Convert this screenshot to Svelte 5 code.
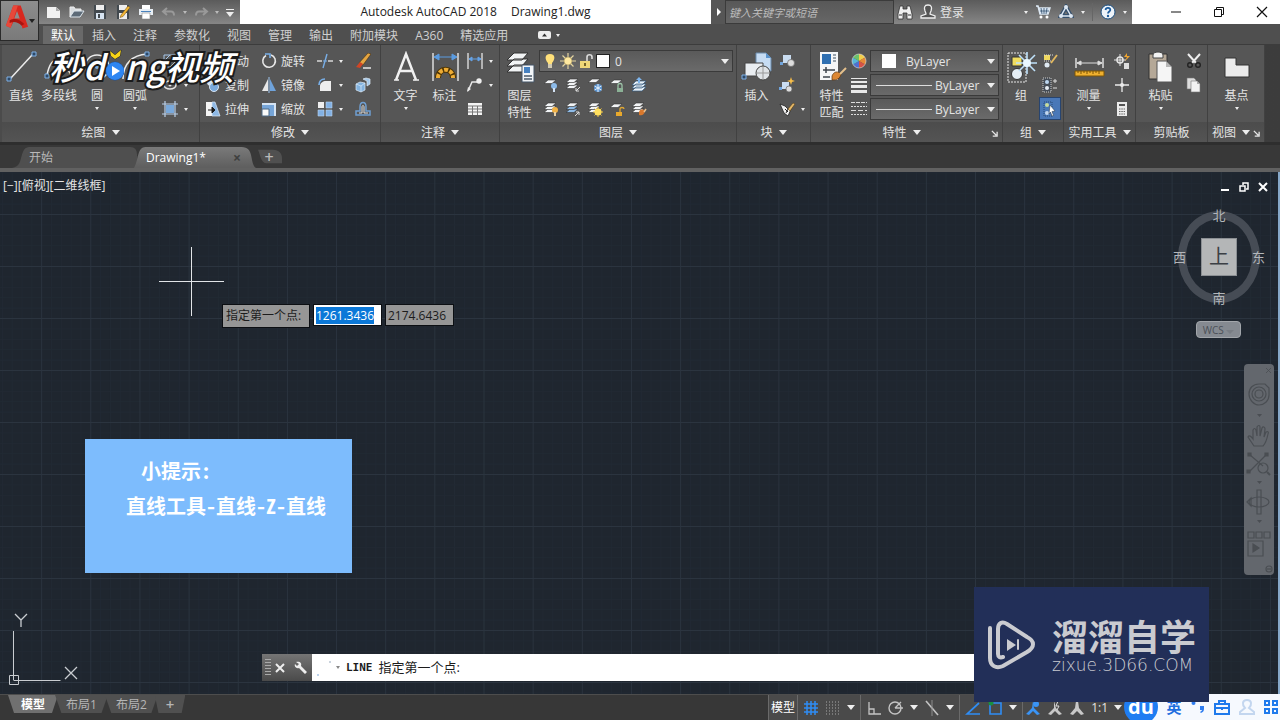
<script>
  import { onMount } from 'svelte';

  const tabs = ['默认', '插入', '注释', '参数化', '视图', '管理', '输出', '附加模块', 'A360', '精选应用'];
  const xLines = Array.from({ length: 60 }, (_, i) => i);
  const yLines = Array.from({ length: 30 }, (_, i) => i);
  const stepX = 49.15;
  const stepY = 52;

  let activeTab = $state('默认');
  let search = $state('');
  let pointX = $state('1261.3436');
  let pointY = $state('2174.6436');
  let xInput;

  onMount(() => {
    xInput.focus();
    xInput.select();
  });

  const sheet = (y, c = '#f2f4f6') => `<path d="M5 ${y}h8l-4 3.500H1z" fill="${c}" stroke="#333" stroke-width=".6"/>`;
  const sheets = sheet(8) + sheet(5) + sheet(2);
  const blueSheets = sheet(8, '#8fbbe6') + sheet(5, '#8fbbe6') + sheet(2);

  // 16 x 16
  const small = {
    file: '<path d="M1 3h9l4 3.500V14H1z" fill="#f1f1f1"/><path d="M10 3v4h4z" fill="#aaa"/>',
    open: '<path d="M1 13V3h4l1 2h6v2" fill="#d9dde0" stroke="#eee"/><path d="M1 13l4-6h10l-4 6z" fill="#5d6b78" stroke="#dfe8ef"/>',
    save: '<path d="M2 1h12v14H2z" fill="#42494f"/><path d="M4 1h8v5H4z" fill="#eee"/><path d="M4 9h8v6H4z" fill="#d7e4f2"/><path d="M6 10h2v4H6z" fill="#42494f"/>',
    saveas: '<path d="M2 1h12v14H2z" fill="#42494f"/><path d="M4 1h8v5H4zM4 9h8v6H4z" fill="#eee"/><path d="M6 11l7-9 2 1.500-7 9-3 1z" fill="#f2b636" stroke="#6b4a12" stroke-width=".5"/>',
    print: '<path d="M4 1h8v4H4z" fill="#fff"/><path d="M1 5h14v6H1z" fill="#e8eef4"/><path d="M3 7h10v1H3z" fill="#4a83bd"/><path d="M4 9h8v6H4z" fill="#fff" stroke="#888" stroke-width=".6"/>',
    undo: '<path d="M6 4L2 7.500 6 11M3 7.500h7c3 0 3 2 3 4" fill="none" stroke="#999" stroke-width="2"/>',
    redo: '<path d="M10 4l4 3.500-4 3.500M13 7.500H6c-3 0-3 2-3 4" fill="none" stroke="#999" stroke-width="2"/>',
    binoculars: '<path d="M3 2h3v3h4V2h3l2 8v5h-5V9H6v6H1v-5z" fill="#f0f0f0" stroke="#333" stroke-width=".8"/><path d="M2 11h3M11 11h3" stroke="#333"/>',
    user: '<path d="M8 1c4 0 4 3 3 6-.5 1-1 2-1 3l5 2v2H1v-2l5-2c0-1-.5-2-1-3C4 4 4 1 8 1z" fill="#555" stroke="#eee" stroke-width="1.300"/>',
    cart: '<path d="M1 2h2l2 8h8l2-6H4" fill="#d6e3f0" stroke="#dce7f2" stroke-width="1.500"/><path d="M5 7h9M6 4l1 6M9 4v6M12 4l-1 6" stroke="#34506f" stroke-width=".8"/><circle cx="6" cy="13" r="1.500" fill="#fff"/><circle cx="12" cy="13" r="1.500" fill="#fff"/>',
    app: '<path d="M8 3l5 9H3z" fill="none" stroke="#35506d" stroke-width="4"/><path d="M8 3l5 9H3z" fill="none" stroke="#dce7f2" stroke-width="1.500"/><circle cx="8" cy="3" r="2" fill="#dce7f2"/><circle cx="3" cy="12" r="2" fill="#dce7f2"/><circle cx="13" cy="12" r="2" fill="#dce7f2"/>',
    help: '<circle cx="8" cy="8" r="7" fill="#eef4fa" stroke="#1d4f80" stroke-width="1"/><path d="M5.500 6C6 3 10.500 3.500 10.300 6c0 1.500-2.300 1.500-2.300 3.500" fill="none" stroke="#1d5c9c" stroke-width="1.800"/><circle cx="8" cy="12" r="1.200" fill="#1d5c9c"/>',
    hatch: '<path d="M2 2h12v12H2z" fill="none" stroke="#a7c7ea"/><path d="M2 8l6-6M2 14L14 2M8 14l6-6" stroke="#a7c7ea"/>',
    ellipse: '<ellipse cx="8" cy="8" rx="6" ry="4" fill="none" stroke="#e4e4e4" stroke-width="1.500"/><circle cx="8" cy="8" r="1.500" fill="#e4e4e4"/>',
    region: '<path d="M4 4h8v8H4z" fill="#79a9dc"/><path d="M3 0v16M13 0v16M0 3h16M0 13h16" stroke="#b9d0ea" stroke-width="1.200"/>',
    move: '<path d="M8 1v14M1 8h14M8 1L6 3.500h4zM8 15l-2-2.500h4zM1 8l2.500-2v4zM15 8l-2.500-2v4z" fill="#fff" stroke="#eee"/>',
    copy: '<circle cx="6" cy="5" r="4" fill="#d9e6f4"/><circle cx="9" cy="10" r="4.500" fill="#79a9dc" stroke="#d5e4f4"/>',
    stretch: '<path d="M1 1h6v14H1z" fill="#f4f4f4"/><path d="M7 1h3l5 14H7z" fill="#8eb8e4" stroke="#dce8f5" stroke-width=".7"/><path d="M3 9h5M7 6l3 3-3 3z" stroke="#1b1b1b" fill="#1b1b1b"/>',
    rotate: '<path d="M5 2.500a6.300 6.300 0 1 0 5-.5" fill="none" stroke="#e6e6e6" stroke-width="1.600"/><path d="M4 1h5v4" fill="none" stroke="#77aee8" stroke-width="1.600"/>',
    mirror: '<path d="M7 2v12H1z" fill="#e8e8e8"/><path d="M9 2v12h6z" fill="#6fa3db"/><path d="M8 0v16" stroke="#9dc4ee"/>',
    scale: '<path d="M1 2h14v13H1z" fill="#76a5d8"/><path d="M1 2h14v2H1zM13 4h2v11h-2z" fill="#d5e3f2"/><path d="M1 8h7v7H1z" fill="#fafafa" stroke="#4d6884"/>',
    trim: '<path d="M0 8h5M11 8h5" stroke="#d8d8d8" stroke-width="1.500"/><path d="M6 8h4" stroke="#79aee6"/><path d="M10 1L6 15" stroke="#79aee6" stroke-width="1.400"/>',
    fillet: '<path d="M3 14V9c0-3 3-5 6-5h5v10z" fill="#eee"/><path d="M2 8c0-3 2-6 6-6" fill="none" stroke="#78b0ea" stroke-width="1.700"/>',
    array: '<path d="M1 1h6v6H1z" fill="#eee"/><path d="M9 1h6v6H9zM1 9h6v6H1zM9 9h6v6H9z" fill="#82b1e4" stroke="#b9d4f0" stroke-width=".6"/>',
    erase: '<path d="M4 10l9-10 3 1-8 11z" fill="#e4a541" stroke="#3b2508" stroke-width=".5"/><path d="M1 14l4-5 3 2-3 4z" fill="#cf4526"/><path d="M8 15h8" stroke="#e8e8e8" stroke-width="1.500"/>',
    explode: '<path d="M1 7l4-2 5 1v7l-4 2-5-2z" fill="#83b3df" stroke="#dcebf8" stroke-width=".7"/><path d="M1 7l5 2 4-3M6 9v6" stroke="#dcebf8" fill="none" stroke-width=".7"/><path d="M8 2l3-1 4 1v5l-3 2V4z" fill="#a3c8ea" stroke="#dcebf8" stroke-width=".7"/>',
    offset: '<path d="M1 14v-4h4V6c0-6 6-6 6 0v4h4v4z" fill="none" stroke="#6f9fd2" stroke-width="1.500"/><path d="M4 12h3V6c0-2 2-2 2 0v6h4" fill="none" stroke="#ddd"/>',
    linear: '<path d="M1 0v16M15 0v16" stroke="#e6e6e6" stroke-width="1.300"/><path d="M2 6h12M2 6l3-2v4zM14 6l-3-2v4z" stroke="#65a2e6" fill="#65a2e6"/>',
    leader: '<path d="M1 14L5 5h5" fill="none" stroke="#e8e8e8" stroke-width="1.500"/><path d="M0 15l1-5 3 2z" fill="#e8e8e8"/><circle cx="12" cy="4" r="2.700" fill="#eee"/>',
    table: '<path d="M1 2h14v12H1z" fill="#f4f4f4"/><path d="M1 5h14M1 8h14M1 11h14M5.500 5v9M10.500 5v9" stroke="#777"/>',
    bulb: '<path d="M8 1c6 0 5 6 2 9v4H6v-4C3 7 2 1 8 1z" fill="#ffe07a"/><path d="M6 11h4v4H6z" fill="#d0c9b2"/>',
    sun: '<path d="M8 0v16M0 8h16M2.500 2.500l11 11M13.500 2.500l-11 11" stroke="#e3d3a0" stroke-width="1.200"/><circle cx="8" cy="8" r="4" fill="#ffe9a0" stroke="#8a7b48" stroke-width=".5"/>',
    unlock: '<path d="M9 8V4c0-3 5-3 5 0v2" fill="none" stroke="#ddd" stroke-width="1.600"/><path d="M2 8h10v7H2z" fill="#efd779"/><path d="M7 10v3" stroke="#4b3d10" stroke-width="1.500"/>',
    layOff: sheet(3) + '<circle cx="11" cy="9" r="3" fill="#8dbbe9"/><path d="M11 11v4" stroke="#d4e4f5" stroke-width="2"/>',
    layIso: sheets + '<path d="M15 10l-4 4m0-3v3h3" stroke="#ddd" fill="none"/>',
    layFreeze: sheet(2) + '<circle cx="11" cy="11" r="4" fill="#5a93d0"/><path d="M11 7v8M7.500 9l7 4M14.500 9l-7 4" stroke="#e6f1fb"/>',
    layLock: sheet(3) + '<path d="M9 11V8c0-2 4-2 4 0v3" fill="none" stroke="#9dc4a8" stroke-width="1.300"/><path d="M8 11h6v4H8z" fill="#8bb196"/>',
    layCur: '<path d="M5 10h10l-4 4H1zM5 7h10l-4 4H1zM5 4h10l-4 4H1z" fill="#e9f1f8" stroke="#335a80" stroke-width=".7"/><path d="M8 0l3 3H9v3H7V3H5z" fill="#7fb6ee"/>',
    layOn: sheets + '<circle cx="12" cy="9" r="3" fill="#f2b244"/><path d="M12 11v4" stroke="#e8cfa2" stroke-width="2"/>',
    layUniso: blueSheets + '<path d="M10 15l4-4m0 3v-3h-3" stroke="#ddd" fill="none"/>',
    layThaw: sheets + '<path d="M11 6v10M6 11h10M7.500 7.500l7 7M14.500 7.500l-7 7" stroke="#f2c43d"/><circle cx="11" cy="11" r="3.500" fill="#ffdf5e"/>',
    layUnlock: sheet(3) + '<path d="M11 11V8c0-2 4-2 4 0" fill="none" stroke="#e0a733" stroke-width="1.300"/><path d="M7 11h6v4H7z" fill="#e9a92c"/>',
    layMatch: sheets + '<path d="M8 11c1-3 4-3 6-1-1 4-3 5-6 4z" fill="#d9782c"/><path d="M13 11l2-3" stroke="#e8c090" stroke-width="1.500"/>',
    blkNew: '<path d="M4 2h8v8H4z" fill="#c9dcf0"/><circle cx="12" cy="10" r="3.500" fill="#ddd" stroke="#666" stroke-width=".7"/><path d="M1 9h3v3H1z" fill="#6fa3db"/>',
    blkEdit: '<path d="M3 5h7v7H3z" fill="#c9dcf0"/><circle cx="10" cy="12" r="3" fill="#ddd" stroke="#666" stroke-width=".7"/><path d="M12 0l1 3 3 1-3 1-1 3-1-3-3-1 3-1z" fill="#f6bd4a"/><path d="M0 10h3v3H0z" fill="#6fa3db"/>',
    blkAttr: '<path d="M1 3l5 2 3 3 4-2-4 9-4-3z" fill="#f0f0f0" stroke="#222" stroke-width=".8"/><path d="M6 8l3 3M9 8l-2 4" stroke="#222"/><path d="M9 8l5-6 2 1-5 7z" fill="#e5b868" stroke="#4a3510" stroke-width=".5"/>',
    wheel: '<path d="M8 8V1a7 7 0 0 1 6 3.500z" fill="#f3cf4c"/><path d="M8 8l6-3.500a7 7 0 0 1 0 7z" fill="#e88a36"/><path d="M8 8l6 3.500A7 7 0 0 1 8 15z" fill="#d65346"/><path d="M8 8v7a7 7 0 0 1-6-3.500z" fill="#4f6fd0"/><path d="M8 8l-6 3.500a7 7 0 0 1 0-7z" fill="#58b5d9"/><path d="M8 8L2 4.500A7 7 0 0 1 8 1z" fill="#6cc36a"/><circle cx="8" cy="8" r="7" fill="none" stroke="#ddd" stroke-width=".6"/>',
    weights: '<path d="M0 1h16v1H0zM0 4h16v2H0zM0 8h16v3H0zM0 13h16v3H0z" fill="#e8e8e8"/>',
    dashes: '<path d="M0 1.500h16" stroke="#ddd" stroke-dasharray="4 1"/><path d="M0 5.500h16M0 13.500h16" stroke="#ddd" stroke-dasharray="2 1"/><path d="M0 9.500h16" stroke="#ddd" stroke-dasharray="5 2"/>',
    ungroup: '<path d="M2 2h6v5H2z" fill="#f0d95f"/><path d="M2 2h9M2 8h9" stroke="#ddd" stroke-dasharray="1 1"/><circle cx="5" cy="12" r="2.500" fill="#dfe9f2"/><path d="M9 10l6-8" stroke="#e3b95f" stroke-width="1.800"/>',
    groupEdit: '<path d="M1 1h8v14H1z" fill="#454c55" stroke="#ccc" stroke-dasharray="1 1"/><circle cx="5" cy="5" r="2" fill="#bcd6ef"/><circle cx="5" cy="11" r="2" fill="#e8eef4"/><path d="M11 4h4M13 2v4M11 11h4" stroke="#ddd"/>',
    groupSel: '<path d="M2 1h8v14H2z" fill="none" stroke="#294b73" stroke-dasharray="1 1"/><circle cx="5" cy="4" r="2" fill="#c8dc9c"/><circle cx="5" cy="12" r="2" fill="#c3d7ee"/><path d="M8 4l5 6-3 .5 1.500 4-1.500.5-1.500-4L7 13z" fill="#fff" stroke="#234" stroke-width=".5"/>',
    idPoint: '<circle cx="6" cy="7" r="3" fill="none" stroke="#e5e5e5" stroke-width="1.500"/><path d="M6 1v12M0 7h12" stroke="#e5e5e5"/><path d="M13 0l-3 4h3l-2 4 5-5h-3z" fill="#f0a52f"/><path d="M10 10h5v6h-5z" fill="#ddd"/>',
    cross: '<path d="M8 1v14M1 8h14" stroke="#ececec" stroke-width="1.300"/><circle cx="8" cy="8" r="2" fill="#ececec"/>',
    calc: '<path d="M3 1h10v14H3z" fill="#ececec"/><path d="M5 3h6v2H5z" fill="#555"/><path d="M5 8h6M5 10.500h6M5 13h6" stroke="#666" stroke-dasharray="1.500 .8"/>',
    cut: '<path d="M2 1l8 9M14 1L6 10" stroke="#eee" stroke-width="2"/><circle cx="4" cy="12" r="2.300" fill="none" stroke="#222" stroke-width="1.400"/><circle cx="12" cy="12" r="2.300" fill="none" stroke="#222" stroke-width="1.400"/>',
    pages: '<path d="M1 1h7l2 2v9H1z" fill="#ddd" stroke="#777" stroke-width=".6"/><path d="M5 4h6l3 3v8H5z" fill="#f3f3f3" stroke="#777" stroke-width=".6"/><path d="M11 4v3h3z" fill="#aaa"/>'
  };

  // 32 x 32
  const large = {
    line: '<path d="M5 28L28 3" stroke="#ececec" stroke-width="1.500"/><path d="M2 26h4v4H2zM27 1h4v4h-4z" fill="#2f4a68" stroke="#7fb0e6"/>',
    pline: '<path d="M4 24C8 4 18 4 28 24" fill="none" stroke="#ececec" stroke-width="1.500"/><path d="M2 23h4v4H2z" fill="#2f4a68" stroke="#7fb0e6"/>',
    circle: '<circle cx="16" cy="16" r="12" fill="none" stroke="#ececec" stroke-width="1.500"/><circle cx="16" cy="16" r="2" fill="#7fb0e6"/>',
    arc: '<path d="M4 28C4 12 14 4 28 3" fill="none" stroke="#ececec" stroke-width="1.500"/><path d="M26 1h4v4h-4z" fill="#2f4a68" stroke="#7fb0e6"/>',
    text: '<path d="M6 29L16 3l10 26M9 20h14" fill="none" stroke="#f1f1f1" stroke-width="2.500"/><path d="M4 29h5M23 29h6" stroke="#f1f1f1" stroke-width="1.500"/>',
    dim: '<path d="M4 2v28M29 2v28" stroke="#ddd" stroke-width="1.500"/><path d="M5 6h23M5 6l5-3v6zM28 6l-5-3v6z" fill="#5b9be0" stroke="#5b9be0"/><path d="M9 27c0-11 15-11 15 0" fill="none" stroke="#4e3505" stroke-width="6"/><path d="M9 27c0-11 15-11 15 0" fill="none" stroke="#edac35" stroke-width="4" stroke-dasharray="4 1.500"/>',
    layers: '<path d="M10 14h14l-6 7H3zM10 8h14l-6 7H3zM10 2h14l-6 7H3z" fill="#f2f4f5" stroke="#333"/><path d="M18 14h12v17H18z" fill="#f2f5f8" stroke="#456"/><path d="M20 16h6v6h-6z" fill="#4681c1"/><path d="M20 25h8M20 28h8" stroke="#4b5a69" stroke-width="1.500"/>',
    insert: '<path d="M15 2h10l5 5v13H15z" fill="#c6dcf3" stroke="#6a8cae"/><path d="M25 2v5h5z" fill="#5c94cc"/><path d="M4 12h18v13H4z" fill="#e9edf1" stroke="#444"/><circle cx="22" cy="22" r="7" fill="#dfe3e6" stroke="#444"/><path d="M22 16v12M16 22h12" stroke="#999"/><path d="M1 24h4v4H1z" fill="#2f4a68" stroke="#7fb0e6"/>',
    match: '<path d="M4 1h18v28H4z" fill="#f5f6f7"/><path d="M6 3h9v10H6z" fill="#2f6fb1"/><path d="M17 4h3M17 7h3M17 10h3" stroke="#7b8894" stroke-width="1.500"/><path d="M7 19h12M10 16v6M7 26h7" stroke="#3e454d" stroke-width="1.500"/><path d="M16 25c2-5 6-5 9-2-1 5-4 6-9 6z" fill="#dd8733" stroke="#5d350d" stroke-width=".7"/><path d="M24 23l6-6" stroke="#e4c08c" stroke-width="2"/>',
    group: '<path d="M3 2h18v29H3z" fill="none" stroke="#e6e6e6" stroke-dasharray="2 1"/><path d="M7 6h10v9H7z" fill="#efdc60" stroke="#333"/><circle cx="12" cy="23" r="5.500" fill="#e5eef5" stroke="#333"/><path d="M22 1v22M11 12h21M14 4l16 16M30 4L14 20" stroke="#bfe2fb" stroke-width="1.600"/><circle cx="22" cy="12" r="4" fill="#e9f7ff"/>',
    measure: '<path d="M3 7v10M30 7v10" stroke="#ddd" stroke-width="1.500"/><path d="M4 12h25M4 12l4-2v4zM29 12l-4-2v4z" fill="#ddd" stroke="#ddd"/><path d="M2 20h29v5H2z" fill="#efb02f" stroke="#7d5406"/><path d="M5 20v2M8 20v3M11 20v2M14 20v3M17 20v2M20 20v3M23 20v2M26 20v3" stroke="#7d5406"/>',
    paste: '<path d="M4 3h18v25H4z" fill="#b5a897" stroke="#333"/><path d="M8 4c0-4 10-4 10 0v3H8z" fill="#f3f3f3" stroke="#444"/><path d="M12 10h9l6 6v15H12z" fill="#f5f5f5" stroke="#555"/><path d="M21 10v6h6z" fill="#b6b6b6"/>',
    base: '<path d="M4 7h11v7h13v12H4z" fill="#ebebeb" stroke="#333"/>'
  };

  const status = {
    grid: '<path d="M4 1v14M8 1v14M12 1v14M1 4h14M1 8h14M1 12h14" stroke="#2f8df5" stroke-width="1.500"/>',
    dots: '<path d="M1 2h14M1 5h14M1 8h14M1 11h14M1 14h14" stroke="#a8a8a8" stroke-dasharray="1 2"/>',
    ortho: '<path d="M3 2v12h12M3 9h5v5" fill="none" stroke="#c4c4c4" stroke-width="1.300"/>',
    polar: '<circle cx="7" cy="8" r="6" fill="none" stroke="#c4c4c4" stroke-width="1.400"/><path d="M7 8l6-6M7 8h8" stroke="#c4c4c4" stroke-width="1.400"/>',
    iso: '<path d="M2 1l12 14" stroke="#c4c4c4" stroke-width="1.600"/><path d="M8 0v16" stroke="#8c8c8c"/>',
    track: '<path d="M14 3L2 14h13" fill="none" stroke="#2f8df5" stroke-width="1.700"/>',
    osnap: '<path d="M3 3h11v11H3z" fill="none" stroke="#2f8df5" stroke-width="1.600"/><circle cx="4" cy="3" r="2.500" fill="#18913f"/>',
    annoA: '<path d="M8 1l1 7 6 6-3 1-4-4-4 4-3-1 6-6z" fill="#3a94f6"/><circle cx="11" cy="4" r="3" fill="#3a94f6"/>',
    annoB: '<path d="M7 1l2 7 6 6-3 1-4-4-4 4-3-1 6-6z" fill="#c8c8c8"/><path d="M11 1l-2 5h3l-2 4" stroke="#ddd" fill="none"/>',
    annoC: '<path d="M7 1h2l1 7 5 6-3 1-4-4-4 4-3-1 5-6z" fill="#c8c8c8"/>'
  };
</script>

{#snippet icon(name)}
  <svg class="i16" viewBox="0 0 16 16" aria-hidden="true">{@html small[name] ?? status[name]}</svg>
{/snippet}

{#snippet big(name, lines, caret = false)}
  <button class="big">
    <svg class="i32" viewBox="0 0 32 32" aria-hidden="true">{@html large[name]}</svg>
    {#each lines as text}<span>{text}</span>{/each}
    {#if caret}<i class="caret"></i>{/if}
  </button>
{/snippet}

{#snippet tool(name, text = '', caret = false)}
  <button class="tool" aria-label={text || name}>
    {@render icon(name)}
    {#if text}<span>{text}</span>{/if}
    {#if caret}<i class="caret"></i>{/if}
  </button>
{/snippet}

{#snippet title(text, caret = true, launcher = false)}
  <footer class="panel-title" class:launch={launcher}>
    <span>{text}</span>
    {#if caret}<i class="caret wide"></i>{/if}
    {#if launcher}
      <svg class="launcher" viewBox="0 0 8 8"><path d="M1 1l5 5M7 2v5H2" fill="none" stroke="#e6e6e6" stroke-width="1.500" /></svg>
    {/if}
  </footer>
{/snippet}

<div class="app">
  <header class="titlebar">
    <div class="quick">
      {@render tool('file')}
      {@render tool('open')}
      {@render tool('save')}
      {@render tool('saveas')}
      {@render tool('print')}
      <span class="history">
        {@render tool('undo')}<i class="caret"></i>
        {@render tool('redo')}<i class="caret"></i>
      </span>
      <button class="more" aria-label="自定义"><i class="caret wide"></i></button>
    </div>
    <h1><span>Autodesk AutoCAD 2018</span><span>Drawing1.dwg</span></h1>
    <div class="info">
      <button class="expand" aria-label="展开"><svg viewBox="0 0 6 8"><path d="M1 0l4 4-4 4z" fill="#fff" /></svg></button>
      <input class="search" type="text" aria-label="搜索" placeholder="键入关键字或短语" bind:value={search} />
      <div class="account">
        {@render tool('binoculars')}
        {@render tool('user', '登录')}
        <i class="caret push"></i>
        {@render tool('cart')}
        {@render tool('app')}
        <i class="caret"></i>
        <i class="divider"></i>
        {@render tool('help')}
        <i class="caret"></i>
      </div>
    </div>
    <div class="window">
      <button aria-label="最小化"><svg viewBox="0 0 12 12"><path d="M1 6h10" stroke="#111" /></svg></button>
      <button aria-label="还原"><svg viewBox="0 0 12 12"><path d="M1.500 3.500h7v7h-7zM3.500 3.500v-2h7v7h-2" fill="none" stroke="#111" /></svg></button>
      <button aria-label="关闭"><svg viewBox="0 0 12 12"><path d="M1 1l10 10M11 1L1 11" stroke="#111" stroke-width="1.200" /></svg></button>
    </div>
  </header>

  <button class="logo" aria-label="应用程序菜单">
    <svg viewBox="0 0 26 30">
      <path d="M9 2h8l8 23-6 2-2-7H9l-3 6-5-2z" fill="#d8281f" />
      <path d="M9 2h5L6 26l-5-2z" fill="#e8483a" />
      <path d="M13 8l3 8h-6z" fill="#8e8e8e" />
      <path d="M5 18c5-3 11-1 16 4l-3 2c-4-4-8-5-13-3z" fill="#a9140f" />
    </svg>
    <i class="caret dark"></i>
  </button>

  <nav class="tabs">
    {#each tabs as tab}
      <button class:active={tab === activeTab} onclick={() => (activeTab = tab)}>{tab}</button>
    {/each}
    <button class="fold" aria-label="最小化功能区">
      <svg viewBox="0 0 13 8"><rect width="13" height="8" rx="2" fill="#eee" /><path d="M4 5.500l2.500-3 2.500 3z" fill="#333" /></svg>
      <i class="caret"></i>
    </button>
  </nav>

  <div class="ribbon">
    <section class="panel draw">
      <div class="body">
        {@render big('line', ['直线'])}
        {@render big('pline', ['多段线'])}
        {@render big('circle', ['圆'], true)}
        {@render big('arc', ['圆弧'], true)}
        <div class="col">
          {@render tool('hatch', '', true)}
          {@render tool('ellipse', '', true)}
          {@render tool('region', '', true)}
        </div>
      </div>
      {@render title('绘图')}
    </section>

    <section class="panel modify">
      <div class="body">
        <div class="col">
          {@render tool('move', '移动')}
          {@render tool('copy', '复制')}
          {@render tool('stretch', '拉伸')}
        </div>
        <div class="col">
          {@render tool('rotate', '旋转')}
          {@render tool('mirror', '镜像')}
          {@render tool('scale', '缩放')}
        </div>
        <div class="col">
          {@render tool('trim', '', true)}
          {@render tool('fillet', '', true)}
          {@render tool('array', '', true)}
        </div>
        <div class="col">
          {@render tool('erase')}
          {@render tool('explode')}
          {@render tool('offset')}
        </div>
      </div>
      {@render title('修改')}
    </section>

    <section class="panel annotate">
      <div class="body">
        {@render big('text', ['文字'], true)}
        {@render big('dim', ['标注'])}
        <div class="col">
          {@render tool('linear', '', true)}
          {@render tool('leader', '', true)}
          {@render tool('table')}
        </div>
      </div>
      {@render title('注释')}
    </section>

    <section class="panel layers">
      <div class="body">
        {@render big('layers', ['图层', '特性'])}
        <div class="col stretch">
          <div class="field">
            {@render icon('bulb')}
            {@render icon('sun')}
            {@render icon('unlock')}
            <i class="swatch"></i>
            <select aria-label="图层"><option>0</option></select>
            <i class="caret wide"></i>
          </div>
          <div class="row">
            {@render tool('layOff')}
            {@render tool('layIso')}
            {@render tool('layFreeze')}
            {@render tool('layLock')}
            {@render tool('layCur')}
          </div>
          <div class="row">
            {@render tool('layOn')}
            {@render tool('layUniso')}
            {@render tool('layThaw')}
            {@render tool('layUnlock')}
            {@render tool('layMatch')}
          </div>
        </div>
      </div>
      {@render title('图层')}
    </section>

    <section class="panel block">
      <div class="body">
        {@render big('insert', ['插入'])}
        <div class="col">
          {@render tool('blkNew')}
          {@render tool('blkEdit')}
          {@render tool('blkAttr', '', true)}
        </div>
      </div>
      {@render title('块')}
    </section>

    <section class="panel props">
      <div class="body">
        {@render big('match', ['特性', '匹配'])}
        <div class="col">
          {@render tool('wheel')}
          {@render tool('weights')}
          {@render tool('dashes')}
        </div>
        <div class="col stretch">
          <div class="field">
            <i class="swatch big-swatch"></i>
            <select aria-label="颜色"><option>ByLayer</option></select>
            <i class="caret wide"></i>
          </div>
          <div class="field">
            <i class="sample"></i>
            <select aria-label="线宽"><option>ByLayer</option></select>
            <i class="caret wide"></i>
          </div>
          <div class="field">
            <i class="sample"></i>
            <select aria-label="线型"><option>ByLayer</option></select>
            <i class="caret wide"></i>
          </div>
        </div>
      </div>
      {@render title('特性', true, true)}
    </section>

    <section class="panel group">
      <div class="body">
        {@render big('group', ['组'])}
        <div class="col">
          {@render tool('ungroup')}
          {@render tool('groupEdit')}
          <button class="tool pressed" aria-label="组选择">{@render icon('groupSel')}</button>
        </div>
      </div>
      {@render title('组')}
    </section>

    <section class="panel utility">
      <div class="body">
        {@render big('measure', ['测量'], true)}
        <div class="col">
          {@render tool('idPoint')}
          {@render tool('cross')}
          {@render tool('calc')}
        </div>
      </div>
      {@render title('实用工具')}
    </section>

    <section class="panel clip">
      <div class="body">
        {@render big('paste', ['粘贴'], true)}
        <div class="col">
          {@render tool('cut')}
          {@render tool('pages')}
        </div>
      </div>
      {@render title('剪贴板', false)}
    </section>

    <section class="panel view">
      <div class="body">
        {@render big('base', ['基点'], true)}
      </div>
      {@render title('视图', true, true)}
    </section>
  </div>

  <nav class="files">
    <button class="doc">
      <svg viewBox="0 0 125 23" preserveAspectRatio="none"><path d="M0 23C8 22 8 16 10 9s4-8 9-8h99c5 0 7 3 7 8v14z" fill="#4f4f4f" /></svg>
      <span>开始</span>
    </button>
    <button class="doc current">
      <svg viewBox="0 0 125 23" preserveAspectRatio="none">
        <linearGradient id="doc" x2="0" y2="1"><stop stop-color="#7a7a7a" /><stop offset="1" stop-color="#5e5e5e" /></linearGradient>
        <path d="M0 23C3 18 3 12 5 7s4-6 8-6h97c7 0 9 4 10 9s2 12 5 13z" fill="url(#doc)" />
      </svg>
      <span>Drawing1*</span>
      <b>×</b>
    </button>
    <button class="doc plus" aria-label="新图形">
      <svg viewBox="0 0 26 23" preserveAspectRatio="none"><path d="M2 4h15c6 0 9 4 9 9v5H10C5 18 4 8 2 4z" fill="#505050" /></svg>
      <span>+</span>
    </button>
  </nav>

  <main class="canvas">
    <svg class="grid" aria-hidden="true">
      {#each xLines as i}
        {#each [1, 2, 3, 4] as k}
          <line class="minor" x1={-7.5 + (i + k / 5) * stepX} x2={-7.5 + (i + k / 5) * stepX} y1="0" y2="100%" />
        {/each}
      {/each}
      {#each yLines as i}
        {#each [1, 2, 3, 4] as k}
          <line class="minor" y1={-9.5 + (i + k / 5) * stepY} y2={-9.5 + (i + k / 5) * stepY} x1="0" x2="100%" />
        {/each}
      {/each}
      {#each xLines as i}
        <line class="major" x1={-7.5 + i * stepX} x2={-7.5 + i * stepX} y1="0" y2="100%" />
      {/each}
      {#each yLines as i}
        <line class="major" y1={-9.5 + i * stepY} y2={-9.5 + i * stepY} x1="0" x2="100%" />
      {/each}
    </svg>

    <p class="viewport">[−][俯视][二维线框]</p>

    <div class="mdi">
      <button aria-label="最小化"><svg viewBox="0 0 10 10"><path d="M1 7h8v2H1z" fill="#fff" /></svg></button>
      <button aria-label="还原"><svg viewBox="0 0 10 10"><path d="M1 4h5v5H1zM4 3V1h5v6H7" fill="none" stroke="#fff" stroke-width="1.500" /></svg></button>
      <button aria-label="关闭"><svg viewBox="0 0 10 10"><path d="M1 1l8 8M9 1L1 9" stroke="#fff" stroke-width="2" /></svg></button>
    </div>

    <svg class="crosshair" viewBox="0 0 66 70"><path d="M0 34.500h65M32.500 0v69" stroke="#e2e5e8" /></svg>

    <form class="dynamic" onsubmit={(e) => e.preventDefault()}>
      <label for="px">指定第一个点:</label>
      <input id="px" bind:this={xInput} bind:value={pointX} />
      <input class="idle" aria-label="Y" bind:value={pointY} />
    </form>

    <aside class="tip">
      <p class="head">小提示:</p>
      <p>直线工具-直线-Z-直线</p>
    </aside>

    <svg class="ucs" viewBox="0 0 72 74">
      <path d="M5.500 19v49M1.500 63.500h9v9h-9zM5.500 68.500h47" fill="none" stroke="#c9cdd1" />
      <path d="M7 2l6 6 6-6M13 8v7M57 55l12 12M69 55L57 67" fill="none" stroke="#c9cdd1" stroke-width="1.300" />
    </svg>

    <div class="cube">
      <span>北</span>
      <div class="ring">
        <span>西</span>
        <button>上</button>
        <span>东</span>
      </div>
      <span>南</span>
    </div>
    <button class="wcs">WCS <i></i></button>

    <div class="navbar">
      <svg viewBox="0 0 30 211" fill="none" stroke="#4a4e53" stroke-width="1.200">
        <path d="M22 4l5 5M27 4l-5 5" stroke-width=".8" />
        <path d="M15 20h6l4 4v7c0 6-5 10-10 10S5 36 5 30s4-10 10-10z" /><circle cx="15" cy="30" r="7" /><circle cx="15" cy="30" r="4" />
        <path d="M13 50h5l-2.500 3z" fill="#4a4e53" stroke="none" />
        <path d="M10 82l-6-9c1-2 3-1 5 2V66c1-2 2-2 3 0l1 6V63c1-2 3-2 3 0v9l2-8c1-2 3-1 3 1l-1 8 2-5c2-1 3 0 2 2-1 5-2 9-5 12z" />
        <path d="M6 91l13 11M22 91L5 108" /><path d="M4 89h3v3H4zM21 89h3v3h-3zM3 106h3v3H3z" fill="#4a4e53" /><circle cx="19" cy="104" r="5" /><path d="M23 108l3 3" stroke-width="2" />
        <path d="M13 117h5l-2.500 3z" fill="#4a4e53" stroke="none" />
        <ellipse cx="15" cy="138" rx="10" ry="5" /><path d="M13 126h4v24h-4zM3 138l4-4v8z" />
        <path d="M13 156h5l-2.500 3z" fill="#4a4e53" stroke="none" />
        <path d="M4 168h6v6H4zM12 168h6v6h-6zM20 168h6v6h-6zM4 177h15v15H4z" /><path d="M9 180l6 4-6 4z" fill="#4a4e53" />
        <circle cx="25" cy="205" r="3" /><path d="M23 205h4" />
      </svg>
    </div>

    <div class="command">
      <i class="grip"></i>
      <button aria-label="关闭"><svg viewBox="0 0 10 10"><path d="M1 1l8 8M9 1L1 9" stroke="#eee" stroke-width="2" /></svg></button>
      <button aria-label="自定义"><svg viewBox="0 0 14 14"><path d="M2 1c4-1 6 1 5 4l6 6-2 2-6-6C2 8 0 5 1 3l2 2 2-2z" fill="#eee" /></svg></button>
      <label for="cmd">
        <svg viewBox="0 0 24 20"><circle cx="6" cy="17" r="1" fill="#a9c4e6" /><circle cx="18" cy="4" r="1" fill="#b9c4d2" /></svg>
        <i class="caret grey"></i><b>LINE</b> 指定第一个点:
      </label>
      <input id="cmd" />
    </div>
  </main>

  <footer class="status">
    <div class="layouts">
      <button class="on">模型</button>
      <button>布局1</button>
      <button>布局2</button>
      <button class="add">+</button>
    </div>
    <div class="toggles">
      <button class="space">模型</button>
      <div class="set">
        {@render tool('grid')}
        {@render tool('dots')}
        <i class="caret wide"></i>
      </div>
      <div class="set">
        {@render tool('ortho')}
        {@render tool('polar')}
        <i class="caret wide"></i>
        {@render tool('iso')}
        <i class="caret wide"></i>
      </div>
      <div class="set">
        {@render tool('track')}
        {@render tool('osnap')}
        <i class="caret wide"></i>
      </div>
      <div class="set anno">
        {@render tool('annoA')}
        {@render tool('annoB')}
        {@render tool('annoC')}
        <button class="ratio">1:1</button>
        <i class="caret wide"></i>
      </div>
    </div>
    <div class="ime">
      <span class="du">du</span>
      <button class="lang">英</button>
      <svg viewBox="0 0 16 16"><circle cx="3.500" cy="4" r="2" fill="#2f7df0" /><path d="M10 7h4v3c0 2-1 3-3 4l-1-1c1-1 2-1 2-2h-2z" fill="#2f7df0" /></svg>
      <svg viewBox="0 0 16 16"><path d="M1 5h14v10H1zM5 5V2h6v3M1 9h14M8 8v3" fill="none" stroke="#1f7aec" stroke-width="2" /></svg>
      <svg viewBox="0 0 16 16"><path d="M8 1c5 0 5 5 2 8l5 4v2H1v-2l5-4C3 6 3 1 8 1z" fill="none" stroke="#c3d6ef" stroke-width="2" /></svg>
      <svg viewBox="0 0 16 16"><path d="M2 2h4v4H2zM10 2h4v4h-4zM2 10h4v4H2zM10 10h4v4h-4z" fill="none" stroke="#1f7aec" stroke-width="2" /></svg>
    </div>
  </footer>

  <div class="brand">
    <span>秒d</span>
    <svg viewBox="0 0 20 34">
      <path d="M6 2l5 4 6-5-1 6-5 3-4-3z" fill="#f7d417" stroke="#222" />
      <circle cx="11" cy="22" r="9" fill="#2e86f2" stroke="#1b4f97" />
      <path d="M8 17l8 5-8 5z" fill="#fff" />
    </svg>
    <span>ng视频</span>
  </div>

  <div class="site">
    <svg viewBox="0 0 48 50" fill="none" stroke="#cacbd0" stroke-width="4" stroke-linecap="round">
      <path d="M3 8v30c0 8 6 11 13 8l24-14c8-5 8-11 0-15L20 4c-5-3-9-1-9 5v25c0 3 2 4 5 3" />
      <path d="M20 19l9 6-9 6z" fill="#cacbd0" stroke="none" /><path d="M31 20v9" stroke-width="2" />
    </svg>
    <div>
      <strong>溜溜自学</strong>
      <span>zixue.3D66.COM</span>
    </div>
  </div>
</div>

<style>
  :global(body) {
    margin: 0;
    background: #1f262f;
  }
  .app {
    position: relative;
    display: flex;
    flex-direction: column;
    min-height: 100vh;
    overflow: hidden;
    color: #e4e4e4;
    font: 12px/17px "Open Sans", "Noto Sans CJK SC", sans-serif;
  }
  .app :is(p, h1) {
    margin: 0;
  }
  button,
  input,
  select {
    box-sizing: border-box;
    margin: 0;
    padding: 0;
    border: 0;
    background: none;
    color: inherit;
    font: inherit;
    outline: none;
  }
  svg {
    display: block;
  }
  .i16 {
    width: 16px;
    height: 16px;
    flex: none;
  }
  .i32 {
    width: 32px;
    height: 32px;
  }
  .caret {
    flex: none;
    border: 2px solid transparent;
    border-top: 3px solid #eee;
    border-bottom: 0;
  }
  .caret.wide {
    border-width: 5px 4px 0;
  }
  .caret.dark {
    border-width: 4px 3px 0;
    border-top-color: #222;
  }

  /* title bar */
  .titlebar {
    display: flex;
    height: 24px;
    background: #fff;
  }
  .quick,
  .account {
    display: flex;
    align-items: center;
    background: linear-gradient(#5b5b5b, #868686);
  }
  .quick {
    box-sizing: border-box;
    width: 240px;
    padding-left: 46px;
    gap: 7px;
  }
  .history {
    display: flex;
    align-items: center;
    gap: 6px;
  }
  .history .caret {
    border-top-color: #bbb;
  }
  .more {
    padding-top: 2px;
  }
  .more .caret {
    display: block;
  }
  .more::before {
    content: "";
    display: block;
    height: 1px;
    margin-bottom: 2px;
    background: #eee;
  }
  h1 {
    flex: 1;
    display: flex;
    justify-content: center;
    gap: 14px;
    color: #222;
    font-size: 12px;
    font-weight: 400;
    line-height: 24px;
  }
  .info {
    display: flex;
    width: 421px;
  }
  .expand {
    width: 14px;
    padding-left: 5px;
    background: #565656;
  }
  .expand svg {
    width: 6px;
    height: 8px;
  }
  .search {
    width: 169px;
    padding: 0 3px;
    border: 1px solid #3b3b3b;
    background: linear-gradient(#585858, #666);
    font-size: 11px;
  }
  .search::placeholder {
    color: #bbb;
    font-style: italic;
  }
  .account {
    flex: 1;
    gap: 7px;
    padding: 0 5px 0 3px;
  }
  .push {
    margin-left: auto;
  }
  .divider {
    width: 1px;
    height: 18px;
    background: #666;
  }
  .window {
    display: flex;
    width: 148px;
    justify-content: flex-end;
    gap: 31px;
    box-sizing: border-box;
    padding-right: 12px;
  }
  .window svg {
    width: 12px;
    height: 12px;
  }

  .logo {
    position: absolute;
    top: 0;
    left: 0;
    display: flex;
    align-items: center;
    width: 39px;
    height: 41px;
    padding-left: 4px;
    border: 1px solid #2a2a2a;
    background: linear-gradient(#8d8d8d, #7a7a7a);
  }
  .logo svg {
    width: 24px;
    height: 29px;
    margin-bottom: 7px;
  }

  /* ribbon */
  .tabs {
    display: flex;
    gap: 1px;
    height: 21px;
    padding: 0 0 0 43px;
    align-items: flex-end;
    border-bottom: 1px solid #3c3c3c;
    box-sizing: border-box;
    background: #4f4f4f;
    color: #cfcfcf;
  }
  .tabs button {
    height: 18px;
    padding: 0 8px;
  }
  .tabs .active {
    background: #696969;
    color: #fff;
  }
  .tabs .fold {
    display: flex;
    align-items: center;
    gap: 5px;
    margin-left: 13px;
  }
  .fold svg {
    width: 13px;
    height: 8px;
  }
  .ribbon {
    display: flex;
    padding-left: 2px;
    border-bottom: 3px solid #2e2e2e;
    background: linear-gradient(90deg, #4b4b4b, #3c3c3c);
  }
  .panel {
    display: flex;
    flex-direction: column;
    box-sizing: border-box;
    border-right: 1px solid #414141;
    background: #565656;
  }
  .draw { width: 198px; }
  .modify { width: 181px; }
  .annotate { width: 119px; }
  .layers { width: 237px; }
  .block { width: 74px; }
  .props { width: 192px; }
  .group { width: 61px; }
  .utility,
  .clip { width: 72px; }
  .view { width: 57px; }
  .body {
    display: flex;
    height: 77px;
  }
  .panel-title {
    position: relative;
    display: flex;
    align-items: center;
    justify-content: center;
    gap: 6px;
    height: 20px;
    background: linear-gradient(#4c4c4c, #545454);
  }
  .panel-title.launch {
    padding-right: 10px;
  }
  .launcher {
    position: absolute;
    right: 4px;
    bottom: 5px;
    width: 7px;
    height: 7px;
  }
  .big {
    display: flex;
    flex-direction: column;
    align-items: center;
    flex: none;
    width: 39px;
    padding-top: 6px;
  }
  .big .i32 {
    margin-bottom: 4px;
  }
  .big .caret {
    margin-top: 3px;
  }
  .col {
    display: flex;
    flex-direction: column;
    padding-top: 4px;
  }
  .stretch {
    flex: 1;
    padding-right: 3px;
  }
  .tool {
    display: flex;
    align-items: center;
    gap: 4px;
  }
  .col .tool {
    height: 24px;
  }
  .col .caret {
    margin-left: 2px;
  }
  .draw .big {
    width: 38px;
  }
  .draw .col {
    padding-left: 8px;
  }
  .modify .body {
    gap: 12px;
    padding-left: 5px;
  }
  .annotate .body {
    padding-left: 5px;
  }
  .annotate .col,
  .block .col {
    padding-left: 3px;
  }
  .props .body {
    padding-left: 1px;
  }
  .group .tool {
    width: 22px;
    justify-content: center;
  }
  .group .big {
    width: 36px;
  }
  .group .pressed {
    height: 23px;
    background: #4a78b8;
    box-shadow: inset 0 0 0 1px #27446f;
  }
  .utility .body,
  .clip .body {
    padding-left: 5px;
    gap: 6px;
  }
  .view .body {
    padding-left: 9px;
  }
  .row {
    display: flex;
    gap: 6px;
    padding-left: 4px;
  }
  .field {
    display: flex;
    align-items: center;
    gap: 2px;
    box-sizing: border-box;
    height: 22px;
    margin: 1px 0;
    padding: 0 3px 0 2px;
    border: 1px solid #3a3a3a;
    background: linear-gradient(#5a5a5a, #6a6a6a);
  }
  .props .field {
    gap: 3px;
    margin-left: 3px;
    padding-left: 5px;
  }
  .field select {
    flex: 1;
    min-width: 0;
    appearance: none;
  }
  .swatch {
    width: 12px;
    height: 12px;
    margin-right: 3px;
    border: 1px solid #222;
    background: #fff;
  }
  .big-swatch {
    margin: 0 7px 0 6px;
    border-color: #fff;
  }
  .sample {
    width: 56px;
    height: 1px;
    background: #ddd;
  }

  /* document tabs */
  .files {
    display: flex;
    height: 27px;
    padding: 1px 0 0 12px;
    border-bottom: 4px solid #616161;
    box-sizing: border-box;
    background: #383838;
    color: #b9b9b9;
  }
  .doc {
    position: relative;
    display: flex;
    align-items: center;
    width: 125px;
    height: 22px;
    padding-left: 17px;
  }
  .doc svg {
    position: absolute;
    inset: 0;
    width: 100%;
    height: 100%;
  }
  .doc span,
  .doc b {
    position: relative;
  }
  .doc.current {
    width: 122px;
    padding: 0 15px 0 12px;
    margin-left: -3px;
    justify-content: space-between;
    color: #fff;
  }
  .doc b {
    color: #3f3f3f;
    font-size: 14px;
  }
  .doc.plus {
    width: 26px;
    padding: 0;
    justify-content: center;
    font-size: 16px;
    font-weight: 600;
  }

  /* drawing area */
  .canvas {
    position: relative;
    flex: 1;
    border-right: 2px solid #86a8c9;
    background: #1f262f;
  }
  .canvas > * {
    position: absolute;
  }
  .grid {
    width: 100%;
    height: 100%;
  }
  .minor {
    stroke: #222a34;
  }
  .major {
    stroke: #2b343f;
  }
  .viewport {
    top: 5px;
    left: 3px;
  }
  .mdi {
    top: 10px;
    right: 10px;
    display: flex;
    gap: 9px;
  }
  .mdi svg {
    width: 10px;
    height: 10px;
  }
  .crosshair {
    top: 75px;
    left: 159px;
    width: 66px;
    height: 70px;
  }
  .dynamic {
    top: 132px;
    left: 222px;
    display: flex;
    align-items: flex-start;
    gap: 3px;
  }
  .dynamic label,
  .dynamic input {
    box-sizing: border-box;
    height: 22px;
    border: 1px solid #0c0f13;
    background: #fff;
    color: #1c1c1c;
  }
  .dynamic label {
    width: 88px;
    height: 24px;
    padding: 2px 3px;
    background: #969696;
    white-space: nowrap;
  }
  .dynamic input {
    width: 69px;
    padding: 0 2px;
  }
  .dynamic .idle {
    background: #969696;
  }
  .dynamic input::selection {
    background: #0b78d8;
    color: #fff;
  }
  .tip {
    top: 267px;
    left: 85px;
    padding: 14px 26px 50px 41px;
    background: #7dbcfd;
    color: #fff;
    font: bold 20px/35px "Noto Sans CJK SC", sans-serif;
    font-feature-settings: "hwid";
  }
  .tip .head {
    padding-left: 15px;
  }
  .ucs {
    bottom: 8px;
    left: 8px;
    width: 72px;
    height: 74px;
  }
  .cube {
    top: 35px;
    right: 11px;
    display: flex;
    flex-direction: column;
    align-items: center;
    width: 96px;
    color: #b3b6ba;
    font-size: 13px;
    line-height: 17px;
  }
  .cube > span,
  .ring > span {
    position: relative;
    z-index: 1;
  }
  .ring {
    display: flex;
    justify-content: space-between;
    align-items: center;
    width: 92px;
    height: 66px;
  }
  .ring::before {
    content: "";
    position: absolute;
    top: 4px;
    left: 7px;
    width: 66px;
    height: 76px;
    border: 8px solid #464c55;
    border-radius: 50%;
  }
  .cube button {
    position: relative;
    width: 36px;
    height: 38px;
    border: 1px solid #8b8f93;
    background: #b4b6b7;
    color: #3b3f45;
    font-size: 20px;
    line-height: 34px;
  }
  .wcs {
    top: 149px;
    right: 37px;
    width: 45px;
    height: 17px;
    border-radius: 4px;
    border: 1px solid #a2a6ab;
    background: #858a91;
    color: #4b5057;
    font-size: 10px;
    line-height: 14px;
  }
  .wcs i {
    display: inline-block;
    border: 4px solid transparent;
    border-top-color: #787d84;
    border-bottom: 0;
  }
  .navbar {
    top: 192px;
    right: 4px;
    border-radius: 4px;
    background: #63676d;
  }
  .navbar svg {
    width: 30px;
    height: 211px;
  }
  .command {
    right: 100px;
    bottom: 13px;
    left: 262px;
    display: flex;
    align-items: center;
    height: 27px;
    background: linear-gradient(#757575, #4a4a4a);
  }
  .grip {
    width: 6px;
    height: 18px;
    margin: 0 4px 0 3px;
    background: repeating-linear-gradient(#aaa 0 1px, transparent 1px 3px);
  }
  .command button svg {
    width: 10px;
    height: 10px;
  }
  .command button + button svg {
    width: 14px;
    height: 14px;
    margin: 0 4px 0 9px;
  }
  .command label {
    display: flex;
    align-items: center;
    gap: 6px;
    align-self: stretch;
    background: #fff;
    color: #1c1c1c;
    font-size: 13px;
    white-space: nowrap;
  }
  .command label svg {
    width: 24px;
    height: 20px;
    margin-right: -6px;
  }
  .command b {
    font: bold 11px/17px "DejaVu Sans Mono", monospace;
  }
  .command .grey {
    border-top-color: #888;
  }
  .command input {
    flex: 1;
    align-self: stretch;
    background: #fff;
    color: #111;
  }

  /* status bar */
  .status {
    display: flex;
    justify-content: space-between;
    height: 26px;
    background: #373737;
    border-top: 1px solid #4d4d4d;
    box-sizing: border-box;
  }
  .layouts {
    display: flex;
    align-items: flex-start;
    padding-left: 8px;
    color: #b5b5b5;
  }
  .layouts button {
    height: 18px;
    padding: 0 11px;
    margin-right: -3px;
    background: #505050;
    clip-path: polygon(0 0, 100% 0, 88% 100%, 12% 100%);
  }
  .layouts .on {
    padding: 0 13px;
    background: #707070;
    color: #fff;
    font-weight: 700;
  }
  .layouts .add {
    font-size: 15px;
    font-weight: 600;
  }
  .toggles {
    display: flex;
    margin-left: auto;
    background: #4a4a4a;
  }
  .toggles .set {
    display: flex;
    align-items: center;
    gap: 6px;
    padding: 0 5px;
    border-left: 1px solid #6a6a6a;
  }
  .toggles .anno {
    padding: 0 2px;
  }
  .space {
    padding: 0 2px;
    border-left: 1px solid #6a6a6a;
    color: #fff;
  }
  .ime {
    display: flex;
    align-items: center;
    justify-content: space-between;
    width: 156px;
    margin-top: -1px;
    padding-right: 1px;
    background: linear-gradient(90deg, #4a4a4a 16px, #f6f9fe 16px);
    box-sizing: border-box;
  }
  .ime svg {
    width: 16px;
    height: 16px;
  }
  .du {
    display: grid;
    place-items: center;
    width: 34px;
    height: 34px;
    margin: -2px 0;
    border-radius: 50%;
    background: #1f7df2;
    color: #fff;
    font: bold 20px/20px "Open Sans", sans-serif;
  }
  .lang {
    color: #1f6fdf;
    font-size: 15px;
    font-weight: 700;
  }

  /* overlays */
  .brand {
    position: absolute;
    top: 45px;
    left: 49px;
    display: flex;
    align-items: center;
    color: #fff;
    font: italic 500 34px/42px "Noto Sans CJK SC", sans-serif;
    -webkit-text-stroke: 4px #1b1b1b;
    paint-order: stroke fill;
  }
  .brand svg {
    width: 20px;
    height: 34px;
    -webkit-text-stroke: 0;
  }
  .site {
    position: absolute;
    right: 71px;
    bottom: 18px;
    display: flex;
    align-items: center;
    gap: 17px;
    box-sizing: border-box;
    width: 235px;
    height: 115px;
    padding-left: 13px;
    background: #222f58;
    color: #cacbd0;
  }
  .site svg {
    width: 48px;
    height: 50px;
  }
  .site strong,
  .site span {
    display: block;
  }
  .site strong {
    font: 700 36px/40px "Noto Sans CJK SC", sans-serif;
  }
  .site span {
    font: 200 17px/20px "DejaVu Sans", sans-serif;
  }
</style>
